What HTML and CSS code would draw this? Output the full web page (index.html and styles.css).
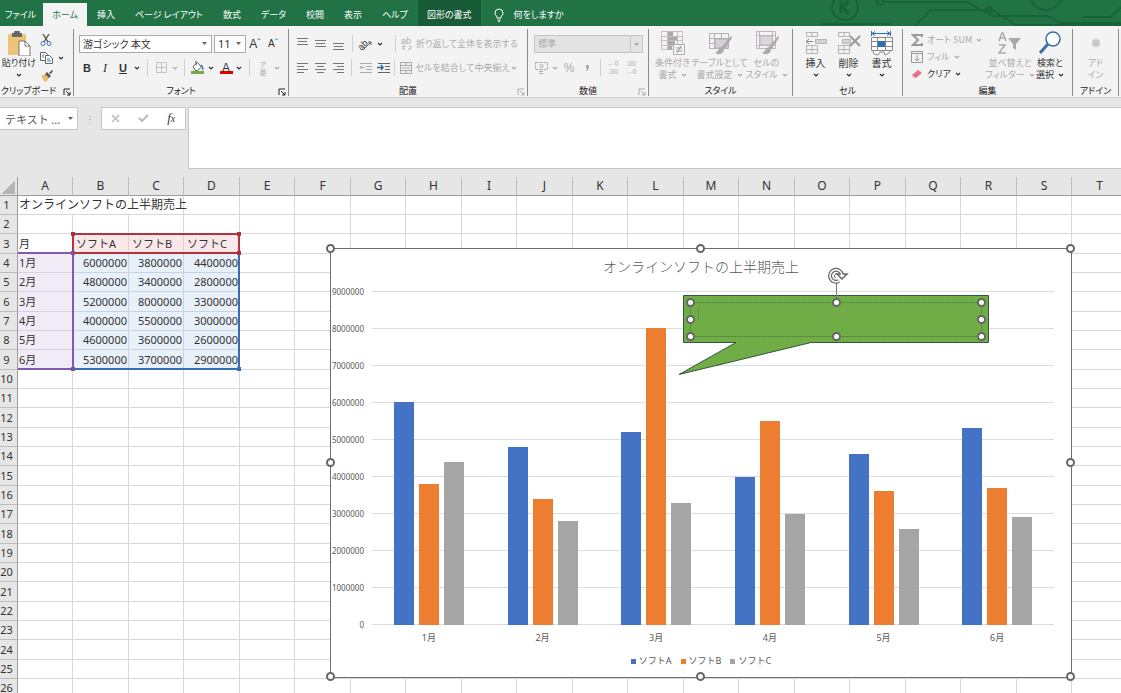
FILE: index.html
```
<!DOCTYPE html>
<html lang="ja">
<head>
    <meta charset="UTF-8">
    <meta name="viewport" content="width=device-width, initial-scale=1.0">
    <title>オンラインソフトの上半期売上</title>
    <link rel="stylesheet" href="styles.css">
</head>
<body>
    <!-- Shared icons -->
    <svg class="defs" width="0" height="0" aria-hidden="true">
        <symbol id="chev" viewBox="0 0 6 6"><path d="M1 2l2 2 2-2" fill="none" stroke="currentColor" stroke-width="1.2"/></symbol>
        <symbol id="launch" viewBox="0 0 8 8"><path d="M1 7V1h6M3 3l4 4M7 4v3H4" fill="none" stroke="currentColor"/></symbol>
    </svg>

    <nav class="tabs">
        <button class="tab file">ファイル</button>
        <button class="tab active">ホーム</button>
        <button class="tab">挿入</button>
        <button class="tab">ページ レイアウト</button>
        <button class="tab">数式</button>
        <button class="tab">データ</button>
        <button class="tab">校閲</button>
        <button class="tab">表示</button>
        <button class="tab">ヘルプ</button>
        <button class="tab context">図形の書式</button>
        <button class="tab tell">
            <svg width="10" height="14" viewBox="0 0 10 14" fill="none" stroke="#fff"><path d="M3 10V8.500C1.500 7.500 1 6.500 1 5a4 4 0 0 1 8 0c0 1.500-.5 2.500-2 3.500V10zM3.500 12h3M4 13.500h2"/></svg>
            何をしますか
        </button>
        <svg class="circuit" width="300" height="26" viewBox="0 0 300 26" fill="none" stroke="#1a6339" stroke-width="2">
            <circle cx="24" cy="7" r="13"/><path d="M20 1v12M28 1l-7 6 7 7" stroke-width="3"/>
            <circle cx="59" cy="2" r="3"/><path d="M62 2h84l26 14h55l12 7h61"/>
            <path d="M94 26l16-16h62"/><circle cx="168" cy="10" r="3"/><path d="M171 10l24 15h105"/>
            <circle cx="225" cy="-6" r="16"/><path d="M262 17h28l10-10M0 24h70"/>
        </svg>
    </nav>

    <div class="ribbon">
        <section class="group clipboard">
            <div class="tools">
                <button class="big">
                    <svg width="24" height="25" viewBox="0 0 24 25"><rect x="1" y="3" width="18" height="21" rx="1" fill="#ebc477"/><path d="M5 2h2a3 3 0 0 1 6 0h2v4H5z" fill="#666"/><path d="M12 10h6l5 5v10H12z" fill="#fff" stroke="#777"/><path d="M18 10v5h5" fill="none" stroke="#777"/></svg>
                    <span>貼り付け</span>
                    <svg class="chev"><use href="#chev"/></svg>
                </button>
                <div class="stack">
                    <button class="btn" aria-label="切り取り"><svg width="12" height="12" viewBox="0 0 12 12" fill="none"><path d="M3 0l5 8M9 0L4 8" stroke="#555" stroke-width="1.400"/><circle cx="3" cy="9.500" r="2" stroke="#3d74b8"/><circle cx="9" cy="9.500" r="2" stroke="#3d74b8"/></svg></button>
                    <button class="btn wide" aria-label="コピー"><svg width="13" height="12" viewBox="0 0 13 12" fill="#fff" stroke="#666"><path d="M.5.500h5l2 2v6h-7z"/><path d="M5.500 3.500h4l3 3v5h-7z"/><path d="M2 3h2M2 5h2M7 7h3M7 9h4" stroke="#3d74b8"/></svg><svg class="chev"><use href="#chev"/></svg></button>
                    <button class="btn" aria-label="書式のコピー"><svg width="13" height="12" viewBox="0 0 13 12"><path d="M1 6l4-2 4 4-3 4-2-1-1-2z" fill="#e9b964"/><path d="M5 4l2-2 4 4-2 2zM9 3l3-3 1 1-2 3z" fill="#555"/></svg></button>
                </div>
            </div>
            <footer>クリップボード<svg class="launch"><use href="#launch"/></svg></footer>
        </section>

        <section class="group font">
            <div class="tools rows">
                <div class="row">
                    <select class="family" aria-label="フォント"><option>游ゴシック 本文</option></select>
                    <select class="size" aria-label="フォント サイズ"><option>11</option></select>
                    <button class="btn grow">A<sup>ˆ</sup></button>
                    <button class="btn shrink">A<sup>ˇ</sup></button>
                </div>
                <div class="row">
                    <button class="btn bold">B</button>
                    <button class="btn italic">I</button>
                    <button class="btn under">U</button>
                    <button class="drop" aria-label="下線"><svg class="chev"><use href="#chev"/></svg></button>
                    <i class="sep"></i>
                    <button class="btn off" aria-label="罫線"><svg width="11" height="11" viewBox="0 0 11 11" fill="none" stroke="#c4c4c4"><path d="M.5.500h10v10H.5zM5.500 0v11M0 5.500h11"/></svg></button>
                    <button class="drop off" aria-label="罫線の種類"><svg class="chev"><use href="#chev"/></svg></button>
                    <i class="sep short"></i>
                    <button class="btn" aria-label="塗りつぶしの色"><svg width="13" height="13" viewBox="0 0 13 13"><path d="M2 5.500L6.500 1.500l4 4.500-4 3.500h-2zM5 0v4" fill="#fff" stroke="#555"/><path d="M10 4c1.500 1 2 3 1.500 5" fill="none" stroke="#3d74b8" stroke-width="1.500"/><path d="M0 10h13v3H0z" fill="#70ad47"/></svg></button>
                    <button class="drop" aria-label="塗りつぶし"><svg class="chev"><use href="#chev"/></svg></button>
                    <button class="btn color">A</button>
                    <button class="drop" aria-label="フォントの色"><svg class="chev"><use href="#chev"/></svg></button>
                    <i class="sep"></i>
                    <button class="btn off ruby"><span>ア</span><span>亜</span></button>
                    <button class="drop off" aria-label="ふりがな"><svg class="chev"><use href="#chev"/></svg></button>
                </div>
            </div>
            <footer>フォント<svg class="launch"><use href="#launch"/></svg></footer>
        </section>

        <section class="group align">
            <div class="tools rows">
                <div class="row">
                    <button class="btn" aria-label="上揃え"><svg width="11" height="13" viewBox="0 0 11 13" stroke="#777"><path d="M0 1.500h11M1 4.500h9M0 7.500h11"/></svg></button>
                    <button class="btn" aria-label="上下中央揃え"><svg width="11" height="13" viewBox="0 0 11 13" stroke="#777"><path d="M0 3.500h11M1 6.500h9M0 9.500h11"/></svg></button>
                    <button class="btn" aria-label="下揃え"><svg width="11" height="13" viewBox="0 0 11 13" stroke="#777"><path d="M0 6.500h11M1 9.500h9M0 12.500h11"/></svg></button>
                    <i class="sep"></i>
                    <button class="btn orient" aria-label="方向"><svg width="16" height="16" viewBox="-1 -2 16 16"><text x="-1" y="9" transform="rotate(-45 5 7)" class="ab">ab</text><path d="M4 12l8-8M9 4h3v3" fill="none" stroke="#555"/></svg></button>
                    <button class="drop pad" aria-label="方向の種類"><svg class="chev"><use href="#chev"/></svg></button>
                    <button class="label off"><svg width="12" height="13" viewBox="0 0 12 13" fill="none" stroke="currentColor"><text x="0" y="7" class="ab">ab</text><path d="M5 9H2v3h2M8 9c3 0 3 3 0 3H7"/></svg>折り返して全体を表示する</button>
                </div>
                <div class="row">
                    <button class="btn" aria-label="左揃え"><svg width="11" height="11" viewBox="0 0 11 11" stroke="#777"><path d="M0 1.500h11M0 4.500h7M0 7.500h11M0 10.500h7"/></svg></button>
                    <button class="btn" aria-label="中央揃え"><svg width="11" height="11" viewBox="0 0 11 11" stroke="#777"><path d="M0 1.500h11M2 4.500h7M0 7.500h11M2 10.500h7"/></svg></button>
                    <button class="btn" aria-label="右揃え"><svg width="11" height="11" viewBox="0 0 11 11" stroke="#777"><path d="M0 1.500h11M4 4.500h7M0 7.500h11M4 10.500h7"/></svg></button>
                    <i class="sep"></i>
                    <button class="btn" aria-label="インデントを減らす"><svg width="13" height="11" viewBox="0 0 13 11" fill="none" stroke="#aaa"><path d="M1 1.500h12M7 4.500h6M7 7.500h6M1 10.500h12M6 5.500H1M3 3.500l-2 2 2 2"/></svg></button>
                    <button class="btn" aria-label="インデントを増やす"><svg width="13" height="11" viewBox="0 0 13 11" fill="none" stroke="#666"><path d="M1 1.500h12M8 4.500h5M8 7.500h5M1 10.500h12"/><path d="M0 5.500h6M4 3l2 2.500L4 8" stroke="#2b6cb5" stroke-width="1.500"/></svg></button>
                    <button class="label off"><svg width="12" height="12" viewBox="0 0 12 12" fill="none" stroke="currentColor"><path d="M.5.500h11v11H.5zM0 3.500h12M0 8.500h12M6 0v3M6 9v3M2 6h8"/></svg>セルを結合して中央揃え</button>
                    <button class="drop off last" aria-label="結合の種類"><svg class="chev"><use href="#chev"/></svg></button>
                </div>
            </div>
            <footer>配置<svg class="launch off"><use href="#launch"/></svg></footer>
        </section>

        <section class="group number">
            <div class="tools rows">
                <div class="row">
                    <select class="format" aria-label="表示形式" disabled><option>標準</option></select>
                </div>
                <div class="row">
                    <button class="btn off" aria-label="通貨"><svg width="13" height="12" viewBox="0 0 13 12" fill="none" stroke="currentColor"><path d="M.5.500h12v7H.5z" stroke-dasharray="3 1"/><circle cx="6.500" cy="4" r="1.500"/><path d="M4 9.500h4M4 11.500h4"/></svg></button>
                    <button class="drop off" aria-label="通貨の種類"><svg class="chev"><use href="#chev"/></svg></button>
                    <button class="btn off percent">%</button>
                    <button class="btn off comma" aria-label="桁区切り"><svg width="4" height="6" viewBox="0 0 4 6"><path d="M1 0h3v3L2 6H1l1-3H1z" fill="currentColor"/></svg></button>
                    <i class="sep short"></i>
                    <button class="btn off dec"><span>←0</span><span>.00</span></button>
                    <button class="btn off dec"><span>.00</span><span>→0</span></button>
                </div>
            </div>
            <footer>数値<svg class="launch off"><use href="#launch"/></svg></footer>
        </section>

        <section class="group style">
            <div class="tools">
                <button class="big off">
                    <svg width="24" height="25" viewBox="0 0 24 25" fill="none" stroke="#c5bfc5"><path d="M.5.500h21v18H.5zM0 5.500h22M0 9.500h22M0 14.500h22M6.500 0v19M16.500 0v19"/><path d="M7 1h5v4H7zM7 6h9v3H7zM7 10h7v4H7zM7 15h4v4H7z" fill="#aaa" stroke="none"/><path d="M12.500 13.500h11v10h-11z" fill="#f3f3f3" stroke="#b5a9b2"/><path d="M15 17h6M15 20h6M20 15l-4 7" stroke="#999"/></svg>
                    <span>条件付き</span><span>書式<svg class="chev"><use href="#chev"/></svg></span>
                </button>
                <button class="big off">
                    <svg width="24" height="25" viewBox="0 0 24 25" fill="none" stroke="#b8b0b8"><path d="M1.500 2.500h19v15h-19zM1 7.500h20M1 12.500h20M6.500 2v16M13.500 2v16"/><path d="M7 8h13v9H7z" fill="#d5d0d5"/><path d="M23 5l-9 11 2 2 8-11zM14 16c-3 0-3 4-7 6 5 3 9 0 9-4z" fill="#aaa" stroke="none"/></svg>
                    <span>テーブルとして</span><span>書式設定<svg class="chev"><use href="#chev"/></svg></span>
                </button>
                <button class="big off">
                    <svg width="24" height="25" viewBox="0 0 24 25" fill="none" stroke="#c2b4bd"><path d="M1.500.500h19v17h-19zM1 4.500h20M1 14.500h20M4.500 0v18M17.500 0v18"/><path d="M5 5h12v9H5z" fill="#dcd5da"/><path d="M23 5l-9 11 2 2 8-11zM14 16c-3 0-3 4-7 6 5 3 9 0 9-4z" fill="#aaa" stroke="none"/></svg>
                    <span>セルの</span><span>スタイル<svg class="chev"><use href="#chev"/></svg></span>
                </button>
            </div>
            <footer>スタイル</footer>
        </section>

        <section class="group cells">
            <div class="tools">
                <button class="big">
                    <svg width="22" height="25" viewBox="0 0 22 25" fill="none" stroke="#b5b5b5"><path d="M1.500 1.500h11v4h-11zM7 1v5M1.500 14.500h11v8h-11zM7 14v9M1 18.500h12"/><path d="M10.500 8.500h11v4h-11z" fill="#d2d2d2"/><path d="M8 10.500H1M4 8l-3 2.500L4 13" stroke="#888"/></svg>
                    <span>挿入</span><svg class="chev"><use href="#chev"/></svg>
                </button>
                <button class="big">
                    <svg width="24" height="25" viewBox="0 0 24 25" fill="none" stroke="#b5b5b5"><path d="M1.500 1.500h11v4h-11zM7 1v5M1.500 14.500h11v8h-11zM7 14v9M1 18.500h12"/><path d="M5.500 8.500h8v4h-8z" fill="#d2d2d2"/><path d="M13 5l10 10M23 5L13 15" stroke="#999" stroke-width="2"/></svg>
                    <span>削除</span><svg class="chev"><use href="#chev"/></svg>
                </button>
                <button class="big">
                    <svg width="22" height="25" viewBox="0 0 22 25" fill="none" stroke="#888"><path d="M1 2.500h18M4 .5l-3 2 3 2M16 .5l3 2-3 2M.5 0v5M19.500 0v5" stroke="#2f6db5"/><path d="M.5 6.500h21v13H.5zM0 10.500h22M0 15.500h22M6.500 6v14M14.500 6v14M2 20l1 3 4 1 2-3h4l1 3 4-2 1-2" fill="#fff"/><path d="M.5 10.500h21M.5 15.500h21M6.500 6v14M14.500 6v14"/><path d="M7 10h7v6H7z" fill="#2f6db5" stroke="none"/></svg>
                    <span>書式</span><svg class="chev"><use href="#chev"/></svg>
                </button>
            </div>
            <footer>セル</footer>
        </section>

        <section class="group edit">
            <div class="tools">
                <div class="stack">
                    <button class="label off"><svg width="12" height="12" viewBox="0 0 12 12" fill="none" stroke="#999" stroke-width="2"><path d="M11 3V1H2l5 5-5 5h9V9"/></svg>オート SUM<svg class="chev"><use href="#chev"/></svg></button>
                    <button class="label off"><svg width="12" height="12" viewBox="0 0 12 12" fill="none" stroke="#999"><path d="M.5.500h11v11H.5zM0 2.500h12M6 4v6M3.500 7.500L6 10l2.500-2.500"/></svg>フィル<svg class="chev"><use href="#chev"/></svg></button>
                    <button class="label"><svg width="12" height="12" viewBox="0 0 12 12"><path d="M1 7l6-5 4 3-6 5H3z" fill="#e5738b"/><path d="M1 7l4 3H3L1 9z" fill="#f6bcc8"/></svg>クリア<svg class="chev"><use href="#chev"/></svg></button>
                </div>
                <button class="big off">
                    <svg width="24" height="25" viewBox="0 0 24 25" fill="none" stroke="#aaa" stroke-width="1.500"><path d="M1 10l3-8h1l3 8M2 7h5M1 14h6l-6 8h7"/><path d="M10 7h13l-5 6v6l-3-2v-4z" fill="#aaa" stroke="none"/></svg>
                    <span>並べ替えと</span><span>フィルター<svg class="chev"><use href="#chev"/></svg></span>
                </button>
                <button class="big">
                    <svg width="22" height="25" viewBox="0 0 22 25" fill="none" stroke="#3d6fa8"><circle cx="14" cy="8" r="7" fill="#fff" stroke-width="1.500"/><path d="M9 13l-8 9" stroke-width="3"/></svg>
                    <span>検索と</span><span>選択<svg class="chev"><use href="#chev"/></svg></span>
                </button>
            </div>
            <footer>編集</footer>
        </section>

        <section class="group addin">
            <div class="tools">
                <button class="big off">
                    <svg width="22" height="25" viewBox="0 0 22 25"><circle cx="11" cy="12" r="4" fill="#c8c8c8"/></svg>
                    <span>アド</span><span>イン</span>
                </button>
            </div>
            <footer>アドイン</footer>
        </section>
    </div>

    <div class="formula-bar">
        <select class="name-box" aria-label="名前ボックス"><option>テキスト ...</option></select>
        <span class="dots">⋮</span>
        <div class="fx">
            <button aria-label="キャンセル"><svg width="9" height="9" viewBox="0 0 9 9" stroke="#bbb" stroke-width="1.500"><path d="M1 1l7 7M8 1L1 8"/></svg></button>
            <button aria-label="入力"><svg width="11" height="9" viewBox="0 0 11 9" fill="none" stroke="#bbb" stroke-width="2"><path d="M1 4l3 3 6-6"/></svg></button>
            <button class="fn">f<small>x</small></button>
        </div>
        <textarea class="formula" aria-label="数式バー"></textarea>
    </div>

    <main class="sheet">
        <table>
            <thead>
                <tr><th class="corner"></th><th>A</th><th>B</th><th>C</th><th>D</th><th>E</th><th>F</th><th>G</th><th>H</th><th>I</th><th>J</th><th>K</th><th>L</th><th>M</th><th>N</th><th>O</th><th>P</th><th>Q</th><th>R</th><th>S</th><th>T</th></tr>
            </thead>
            <tbody id="cells"></tbody>
        </table>

        <!-- Coloured frames round the chart's source ranges -->
        <svg class="ranges" width="244" height="200" viewBox="0 0 244 200" fill="none" stroke-width="2">
            <path d="M18 76h55v116H18" stroke="#8258b0"/>
            <path d="M73 76h166v116H73z" stroke="#3a6cb4"/>
            <path d="M73 57h166v19H73z" stroke="#b5323e"/>
            <path d="M73 77v115" stroke="#8258b0"/>
            <g stroke="none">
                <path d="M71 55h4v4h-4zM237 55h4v4h-4zM237 74h4v4h-4z" fill="#a8323e"/>
                <path d="M71 74h4v4h-4zM71 190h4v4h-4z" fill="#7850a5"/>
                <path d="M237 190h4v4h-4z" fill="#3a6cb4"/>
            </g>
        </svg>

        <div class="chart">
            <h2>オンラインソフトの上半期売上</h2>
            <div class="plot">
                <div class="axis" id="axis"></div>
                <div class="bars" id="bars"></div>
            </div>
            <div class="months" id="months"></div>
            <div class="legend">
                <span class="a">ソフトA</span><span class="b">ソフトB</span><span class="c">ソフトC</span>
            </div>
            <i class="handle n w"></i><i class="handle n"></i><i class="handle n e"></i>
            <i class="handle w"></i><i class="handle e"></i>
            <i class="handle s w"></i><i class="handle s"></i><i class="handle s e"></i>

            <svg class="callout" width="312" height="112" viewBox="0 0 312 112">
                <path d="M5.500 30.500h305v47H133L1 109.500l57-32H5.500z" fill="#70ad47" stroke="#33543f"/>
                <path d="M12.500 37.500h291v34h-291z" fill="none" stroke="#4f7f42" stroke-dasharray="2 1"/>
                <path d="M158.500 18v20" stroke="#777"/>
                <path d="M20.500 41v14" stroke="#5f8f55"/>
                <g fill="#fff" stroke="#666" stroke-width="2">
                    <circle cx="12.500" cy="37.500" r="3.500"/><circle cx="158.500" cy="37.500" r="3.500"/><circle cx="303.500" cy="37.500" r="3.500"/>
                    <circle cx="12.500" cy="54.500" r="3.500"/><circle cx="303.500" cy="54.500" r="3.500"/>
                    <circle cx="12.500" cy="71.500" r="3.500"/><circle cx="158.500" cy="71.500" r="3.500"/><circle cx="303.500" cy="71.500" r="3.500"/>
                </g>
                <!-- Rotate handle -->
                <path d="M161 16a6 6 0 1 1 3-6" fill="none" stroke="#666" stroke-width="4"/>
                <path d="M158 13a2 2 0 1 1 2-3" fill="none" stroke="#666"/>
                <path d="M159 9h10l-5 5z" fill="#fff" stroke="#666" stroke-width="1.500"/>
                <path d="M161 16a6 6 0 1 1 3-6" fill="none" stroke="#fff" stroke-width="1.500"/>
            </svg>
        </div>
    </main>

    <script src="sheet.js"></script>
</body>
</html>
```
FILE: styles.css
```
* {
    box-sizing: border-box;
}
body {
    margin: 0;
    height: 100vh;
    display: flex;
    flex-direction: column;
    overflow: hidden;
    background-color: #e6e6e6;
    color: #333;
    font-family: "Noto Sans CJK JP", sans-serif;
    font-size: 10px;
    line-height: 12px;
}
button, select, textarea {
    font: inherit;
    font-feature-settings: inherit;
    color: inherit;
    margin: 0;
    padding: 0;
    border: none;
    background: none;
    white-space: nowrap;
}
svg {
    flex-shrink: 0;
}
.defs {
    position: absolute;
}

/* Tabs */
.tabs {
    position: relative;
    display: flex;
    align-items: flex-end;
    height: 26px;
    flex-shrink: 0;
    background-color: #217346;
    color: #fff;
    font-size: 9px;
    font-feature-settings: "palt";
}
.tab {
    height: 23px;
    padding: 0 10px;
}
.tab.file {
    padding: 0 7px 0 5px;
}
.tab.active {
    padding: 0 9px;
    background-color: #f3f3f3;
    color: #217346;
}
.tab.context {
    height: 26px;
    padding: 3px 9px 0;
    background-color: #185c37;
}
.tab.tell {
    display: flex;
    align-items: center;
    gap: 10px;
    padding: 0 13px;
}
.circuit {
    position: absolute;
    right: 0;
    top: 0;
}

/* Ribbon */
.ribbon {
    display: flex;
    height: 72px;
    flex-shrink: 0;
    background-color: #f3f3f3;
    border-bottom: 1px solid #d0d0d0;
    font-size: 9px;
    font-feature-settings: "palt";
}
.group {
    display: flex;
    flex-direction: column;
    flex-shrink: 0;
    margin: 3px 0 1px;
    border-right: 1px solid #8c8c8c;
}
.group footer {
    position: relative;
    text-align: center;
    margin-top: auto;
    line-height: 10px;
    white-space: nowrap;
    color: #222;
}
.launch {
    position: absolute;
    right: 2px;
    bottom: 0;
    width: 8px;
    height: 8px;
}
.clipboard { width: 74px; }
.font { width: 215px; }
.align { width: 239px; }
.number { width: 121px; }
.style { width: 144px; }
.cells { width: 110px; }
.edit { width: 170px; }
.addin { width: 46px; }
.clipboard footer { padding-right: 16px; }
.tools {
    display: flex;
    height: 54px;
    padding: 2px 2px 0;
}
.tools.rows {
    flex-direction: column;
    gap: 5px;
    padding: 5px 4px 0;
}
.row {
    display: flex;
    align-items: center;
    height: 19px;
    flex-shrink: 0;
}
.btn {
    display: flex;
    align-items: center;
    justify-content: center;
    width: 18px;
    height: 18px;
    flex-shrink: 0;
}
.btn.wide {
    width: 28px;
    padding-left: 2px;
    gap: 5px;
}
.drop {
    display: flex;
    align-items: center;
    justify-content: center;
    width: 10px;
}
.drop.pad {
    width: 18px;
    padding-right: 8px;
}
.drop.last {
    margin-left: auto;
    margin-right: 4px;
}
.chev {
    width: 6px;
    height: 6px;
}
.off {
    color: #aaa;
}
.sep {
    width: 10px;
    height: 17px;
    background: linear-gradient(#d0d0d0, #d0d0d0) center / 1px 100% no-repeat;
}
.sep.short {
    width: 8px;
}
.big {
    display: flex;
    flex-direction: column;
    align-items: center;
    justify-content: flex-start;
    width: 34px;
    flex-shrink: 0;
}
.big > svg:first-child {
    margin-bottom: 1px;
}
.big > .chev {
    margin-top: 3px;
}
.big span .chev {
    margin-left: 4px;
}
.style .tools {
    padding-left: 0;
}
.style .big {
    width: 47px;
}
.cells .tools {
    padding-left: 6px;
    font-size: 10px;
}
.cells .big {
    width: 33px;
}
.edit .big {
    width: 40px;
}
.addin .big {
    width: 41px;
}
.stack {
    display: flex;
    flex-direction: column;
    align-items: flex-start;
}
.clipboard .stack {
    padding-left: 1px;
}
.edit .stack {
    width: 86px;
    padding-left: 6px;
}
.label {
    display: flex;
    align-items: center;
    gap: 4px;
    height: 18px;
}
.align .label {
    gap: 3px;
    height: 17px;
    margin-left: 2px;
    padding-left: 5px;
    border-left: 1px solid #d0d0d0;
}
.ab {
    font-family: "Liberation Sans", sans-serif;
    font-size: 9px;
    stroke: none;
    fill: currentColor;
}
.row select, .name-box {
    appearance: none;
    height: 18px;
    padding: 0 3px;
    border: 1px solid #ababab;
    background: #fff url("data:image/svg+xml,%3Csvg xmlns='http://www.w3.org/2000/svg' width='5' height='3'%3E%3Cpath d='M0 0h5L2.500 3z' fill='%23666'/%3E%3C/svg%3E") right 4px center no-repeat;
}
.row .family {
    width: 133px;
    margin: 0 2px 0 1px;
    font-size: 10px;
}
.row .size {
    width: 32px;
    font-family: "Noto Sans", sans-serif;
    font-size: 11px;
}
.row .format {
    width: 109px;
    margin-left: 2px;
    background: #e3e3e3 url("data:image/svg+xml,%3Csvg xmlns='http://www.w3.org/2000/svg' width='12' height='16'%3E%3Cpath d='M.5 0v16' stroke='%23c6c6c6'/%3E%3Cpath d='M4 7h5L6.500 10z' fill='%23aaa'/%3E%3C/svg%3E") right center no-repeat;
    border-color: #c6c6c6;
    color: #aaa;
    opacity: 1;
}
.grow, .shrink, .bold, .italic, .under, .color, .percent {
    font-family: "Liberation Sans", sans-serif;
    font-size: 12px;
}
.grow sup, .shrink sup {
    color: #2f6db5;
    font-size: 10px;
    line-height: 6px;
}
.shrink { font-size: 10px; }
.bold, .under { font-weight: bold; font-size: 11px; }
.italic { font-style: italic; font-family: "Liberation Serif", serif; }
.under { text-decoration: underline; }
.color::before {
    content: "";
    width: 13px;
    height: 3px;
    margin: 10px -11px 0 0;
    background-color: #e00000;
}
.ruby, .dec {
    flex-direction: column;
    font-size: 7px;
    line-height: 8px;
}
.dec {
    font-family: "Liberation Sans", sans-serif;
}

/* Formula bar */
.formula-bar {
    display: flex;
    align-items: flex-start;
    height: 79px;
    flex-shrink: 0;
    padding-top: 9px;
}
.name-box {
    width: 78px;
    height: 23px;
    padding-left: 5px;
    border-color: #c6c6c6;
    border-left: none;
    font-size: 11px;
    color: #555;
}
.dots {
    width: 23px;
    line-height: 23px;
    text-align: center;
    color: #999;
}
.fx {
    display: flex;
    width: 85px;
    height: 23px;
    margin-right: 2px;
    background-color: #fff;
    border: 1px solid #c6c6c6;
}
.fx button {
    flex: 1;
}
.fn {
    font-family: "Liberation Serif", serif;
    font-style: italic;
    font-size: 13px;
}
.fn small {
    font-size: 10px;
}
.formula {
    flex: 1;
    height: 62px;
    background-color: #fff;
    border: 1px solid #c6c6c6;
    border-right: none;
    resize: none;
}

/* Sheet */
.sheet {
    position: relative;
    flex: 1;
    overflow: hidden;
    background-color: #fff;
}
table {
    table-layout: fixed;
    width: 1128px;
    border-collapse: separate;
    border-spacing: 0;
    font-family: "Noto Sans", "Noto Sans CJK JP", sans-serif;
    font-size: 11px;
    line-height: 16px;
}
th, td {
    height: 19px;
    padding: 0 1px;
    border-right: 1px solid #d8d8d8;
    border-bottom: 1px solid #d8d8d8;
    white-space: nowrap;
    font-weight: normal;
    text-align: left;
}
tbody tr:nth-child(3n) > * {
    height: 20px;
}
th {
    width: 55px;
    padding: 0;
    background-color: #e6e6e6;
    border-color: #bdbdbd;
    text-align: center;
    font-size: 12px;
}
thead th {
    border-bottom-color: #9c9c9c;
}
thead th:nth-child(odd) {
    width: 56px;
}
thead th.corner {
    width: 18px;
    border-right-color: #9c9c9c;
    background: linear-gradient(135deg, #e6e6e6 50%, #b4b4b4 50%) 1px 3px / 14px 14px no-repeat #e6e6e6;
}
tbody th {
    padding-right: 4px;
    border-right-color: #9c9c9c;
    font-size: 11px;
}
td.title {
    font-size: 12px;
}
td.num {
    text-align: right;
}
td.head {
    background-color: #f9e8ea;
    border-color: #e3cfd2;
    padding-left: 3px;
}
td.month {
    background-color: #f1ebf7;
    border-color: #d9d2e0;
}
td.num {
    background-color: #e8f0fa;
    border-color: #c8d3e0;
}
.ranges {
    position: absolute;
    left: 0;
    top: 0;
}

/* Chart */
.chart {
    position: absolute;
    left: 330px;
    top: 71px;
    width: 742px;
    height: 430px;
    display: flex;
    flex-direction: column;
    background-color: #fff;
    border: 1px solid #6e6e6e;
    color: #595959;
    font-family: "Noto Sans", "Noto Sans CJK JP", sans-serif;
    font-size: 9px;
}
.chart h2 {
    margin: 0;
    padding-top: 8px;
    height: 42px;
    text-align: center;
    font-size: 14px;
    line-height: 20px;
    font-weight: 300;
}
.plot {
    position: relative;
    height: 334px;
    margin-right: 17px;
}
.axis {
    display: flex;
    flex-direction: column;
    justify-content: space-between;
    height: 100%;
    font-size: 8px;
}
.axis div {
    display: flex;
    align-items: center;
    gap: 8px;
    height: 1px;
}
.axis span {
    width: 33px;
    text-align: right;
}
.axis div::after {
    content: "";
    flex: 1;
    height: 1px;
    background-color: #dcdcdc;
}
.bars {
    position: absolute;
    inset: 0 0 0 41px;
    display: flex;
}
.bars div {
    flex: 1;
    display: flex;
    justify-content: center;
    align-items: flex-end;
    gap: 5px;
}
.bars i {
    width: 20px;
}
.a { --fill: #4472c4; }
.b { --fill: #ed7d31; }
.c { --fill: #a5a5a5; }
.bars i, .legend span::before {
    background-color: var(--fill);
}
.months {
    display: flex;
    margin: 7px 17px 0 41px;
    text-align: center;
}
.months span {
    flex: 1;
}
.legend {
    display: flex;
    justify-content: center;
    gap: 9px;
    margin-top: 11px;
}
.legend span {
    display: flex;
    align-items: center;
    gap: 3px;
}
.legend span::before {
    content: "";
    width: 5px;
    height: 5px;
}
.handle {
    position: absolute;
    left: 50%;
    top: 50%;
    width: 9px;
    height: 9px;
    margin: -5px;
    background-color: #fff;
    border: 2px solid #666;
    border-radius: 50%;
}
.handle.n { top: 0; }
.handle.s { top: 100%; }
.handle.w { left: 0; }
.handle.e { left: 100%; }
.callout {
    position: absolute;
    left: 347px;
    top: 16px;
}
```
FILE: sheet.js
```
const products = ['A', 'B', 'C'];
const sales = [
    [6000000, 3800000, 4400000],
    [4800000, 3400000, 2800000],
    [5200000, 8000000, 3300000],
    [4000000, 5500000, 3000000],
    [4600000, 3600000, 2600000],
    [5300000, 3700000, 2900000]
];
const maxValue = 9000000;

// Cells: title in row 1, headings in row 3, months in rows 4 to 9
let rows = '';
for (let r = 1; r <= 26; r++) {
    rows += '<tr><th>' + r + '</th>';
    let c = 0;
    if (r === 1) {
        rows += '<td class="title" colspan="3">オンラインソフトの上半期売上</td>';
        c = 3;
    } else if (r === 3) {
        rows += '<td>月</td>' + products.map(p => '<td class="head">ソフト' + p + '</td>').join('');
        c = 4;
    } else if (r >= 4 && r <= 9) {
        rows += '<td class="month">' + (r - 3) + '月</td>' + sales[r - 4].map(v => '<td class="num">' + v + '</td>').join('');
        c = 4;
    }
    for (; c < 20; c++) {
        rows += '<td></td>';
    }
    rows += '</tr>';
}
document.getElementById('cells').innerHTML = rows;

// Chart
let axis = '';
for (let v = maxValue; v >= 0; v -= 1000000) {
    axis += '<div><span>' + v + '</span></div>';
}
document.getElementById('axis').innerHTML = axis;

document.getElementById('bars').innerHTML = sales.map(month =>
    '<div>' + month.map((v, i) =>
        '<i class="' + 'abc'[i] + '" style="height: ' + (v / maxValue * 100) + '%"></i>').join('') + '</div>').join('');

document.getElementById('months').innerHTML = sales.map((month, i) => '<span>' + (i + 1) + '月</span>').join('');
```
